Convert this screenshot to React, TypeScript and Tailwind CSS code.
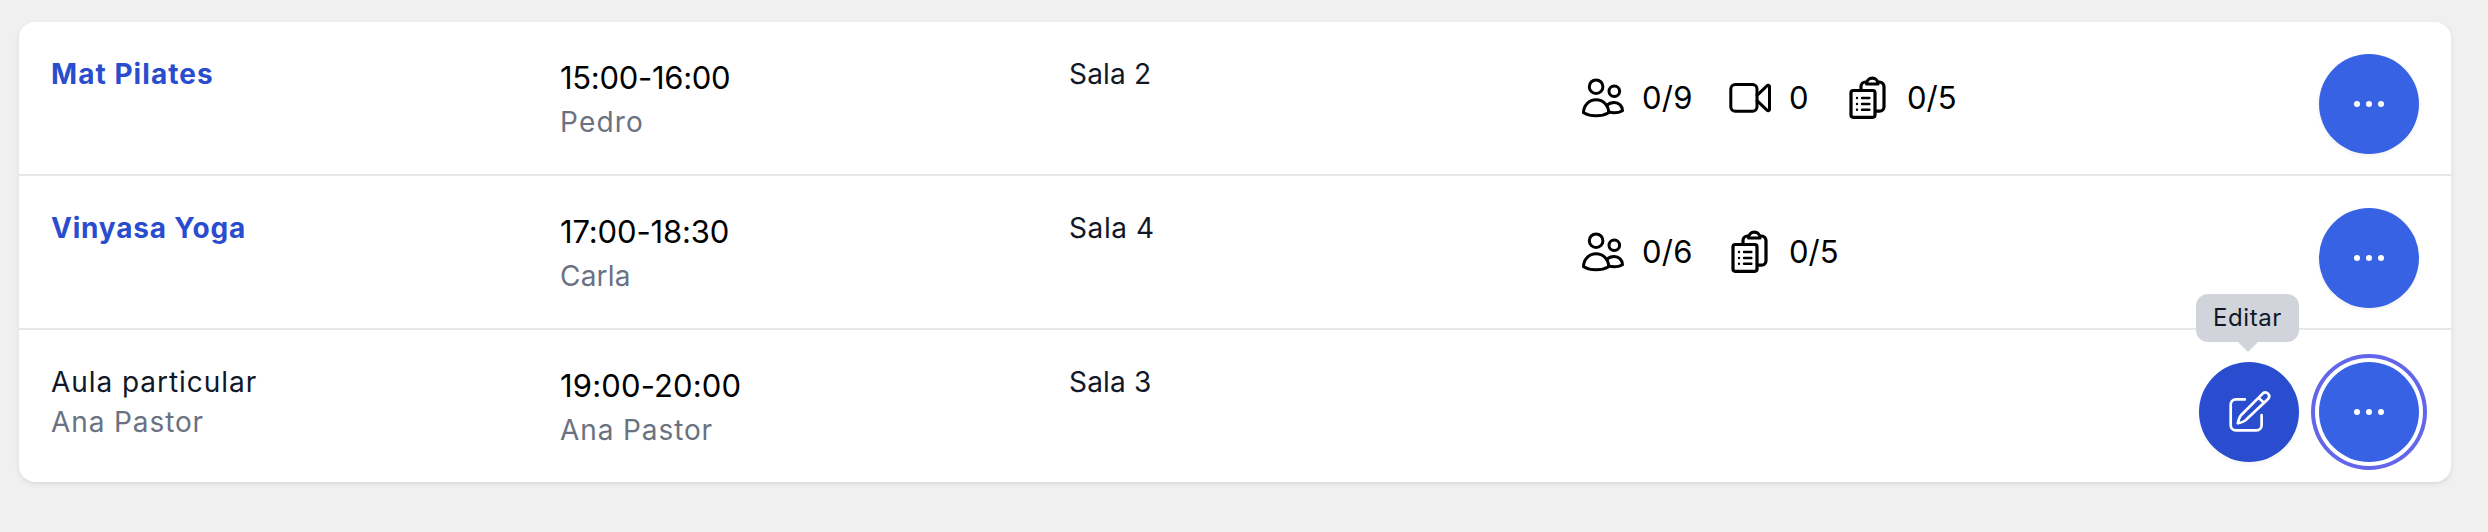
import type { ReactNode } from "react";
import clsx from "clsx";

interface Lesson {
  name: string;
  owner?: string;
  nameClass: string;
  time: string;
  timeClass: string;
  teacher: string;
  teacherClass: string;
  room: string;
  roomClass: string;
  people?: string;
  video?: string;
  list?: string;
  open?: boolean;
}

const lessons: Lesson[] = [
  {
    name: "Mat Pilates",
    nameClass: "font-bold text-[#294dce] tracking-[1.05px]",
    time: "15:00-16:00",
    timeClass: "tracking-[-0.3px]",
    teacher: "Pedro",
    teacherClass: "tracking-[1.2px]",
    room: "Sala 2",
    roomClass: "tracking-[0.2px]",
    people: "0/9",
    video: "0",
    list: "0/5",
  },
  {
    name: "Vinyasa Yoga",
    nameClass: "font-bold text-[#294dce] tracking-[0.8px]",
    time: "17:00-18:30",
    timeClass: "tracking-[-0.15px]",
    teacher: "Carla",
    teacherClass: "tracking-[0.2px]",
    room: "Sala 4",
    roomClass: "tracking-[0.6px]",
    people: "0/6",
    list: "0/5",
  },
  {
    name: "Aula particular",
    owner: "Ana Pastor",
    nameClass: "text-gray-900 tracking-[0.95px]",
    time: "19:00-20:00",
    timeClass: "tracking-[0.15px]",
    teacher: "Ana Pastor",
    teacherClass: "tracking-[0.9px]",
    room: "Sala 3",
    roomClass: "tracking-[0.2px]",
    open: true,
  },
];

const PeopleIcon = () => (
  <svg className="size-12 shrink-0" viewBox="0 0 48 48" fill="none" stroke="currentColor" strokeWidth="3" strokeLinejoin="round" strokeLinecap="round">
    <circle cx="18.100" cy="12.700" r="6.800" />
    <circle cx="36.300" cy="17.300" r="5.300" />
    <path d="M5.500 38.700c0-7.200 5.600-12.900 12.600-12.900s12.600 5.700 12.600 12.900c-3.700 2.100-8 3.100-12.600 3.100s-8.900-1-12.600-3.100z" />
    <path d="M28.700 31.500c1.900-1.900 4.700-3 7.500-3 4.700 0 8.300 3.500 8.300 8.200-2.500 1.400-5.300 2.100-8.300 2.100-1.900 0-3.700-.3-5.500-.9" />
  </svg>
);

const VideoIcon = () => (
  <svg className="size-12 shrink-0" viewBox="0 0 48 48" fill="none" stroke="currentColor" strokeWidth="3" strokeLinejoin="round" strokeLinecap="round">
    <rect x="5.800" y="10.500" width="26.200" height="26.800" rx="4.500" />
    <path d="M32 21.300 42.200 11.600c.9-.8 2.300-.2 2.300 1v22.800c0 1.200-1.400 1.800-2.300 1L32 26.700" />
  </svg>
);

const ListIcon = () => (
  <svg className="size-12 shrink-0" viewBox="0 0 48 48" fill="none" stroke="currentColor" strokeWidth="3.200" strokeLinejoin="round" strokeLinecap="round">
    <rect x="8" y="16.500" width="24" height="26.800" rx="2.200" />
    <path d="M18 16v-3.500a4.500 4.500 0 0 1 4.500-4.500M36 8h.5a4.500 4.500 0 0 1 4.500 4.500v20.300a4.400 4.400 0 0 1-4.400 4.400H33" />
    <path d="M23.600 10c0-3.300 2.500-5.800 5.700-5.800S35 6.700 35 10z" />
    <path strokeWidth="2.400" d="M14 24h.01M19 24h7.400M14 30h.01M19 30h7.400M14 35.800h.01M19 35.800h7.400" />
  </svg>
);

const EditIcon = () => (
  <svg className="size-12 shrink-0" viewBox="0 0 48 48" fill="none" stroke="currentColor" strokeWidth="2.700" strokeLinejoin="round" strokeLinecap="round">
    <path d="M19.800 11.400H10.700a5 5 0 0 0-5 5v20.900a5 5 0 0 0 5 5h20.900a5 5 0 0 0 5-5V27" />
    <path d="M37.900 5.400 16.500 26.800c-2 2-2.900 4.800-3.700 8.500 3.700-.8 6.500-1.700 8.500-3.700L43.300 10.700a3.800 3.800 0 0 0-5.400-5.300zM33.600 9.700l5.500 5.300" />
  </svg>
);

const Count = ({ icon, value, width }: { icon: ReactNode; value: string; width: string }) => (
  <div className="flex items-center gap-4">
    {icon}
    <span className={clsx("text-[31px] leading-[48px] whitespace-nowrap", width)}>{value}</span>
  </div>
);

const Dots = () => (
  <>
    <span className="size-1.5 rounded-full bg-white" />
    <span className="size-1.5 rounded-full bg-white" />
    <span className="size-1.5 rounded-full bg-white" />
  </>
);

const Row = ({ lesson }: { lesson: Lesson }) => (
  <li className="box-content flex h-[120px] px-8 pt-8">
    <div className="w-[509px] shrink-0 text-[28px] leading-10">
      <p className={lesson.nameClass}>{lesson.name}</p>
      {lesson.owner && <p className="tracking-[0.9px] text-gray-500">{lesson.owner}</p>}
    </div>
    <div className="w-[509px] shrink-0">
      <p className={clsx("text-[31px] leading-[48px]", lesson.timeClass)}>{lesson.time}</p>
      <p className={clsx("text-[28px] leading-10 text-gray-500", lesson.teacherClass)}>{lesson.teacher}</p>
    </div>
    <p className={clsx("w-[509px] shrink-0 text-[28px] leading-10 text-gray-900", lesson.roomClass)}>{lesson.room}</p>
    <div className="flex h-[88px] grow items-center gap-8">
      {lesson.people && <Count icon={<PeopleIcon />} value={lesson.people} width="w-[51px] tracking-[0.3px]" />}
      {lesson.video && <Count icon={<VideoIcon />} value={lesson.video} width="w-[22px]" />}
      {lesson.list && <Count icon={<ListIcon />} value={lesson.list} width="w-[51px]" />}
    </div>
    <div className="flex gap-5">
      {lesson.open && (
        <div className="relative">
          <button className="flex size-[100px] items-center justify-center rounded-full bg-[#294dce] text-white shadow-[0_2px_4px_rgba(0,0,0,0.05)]">
            <EditIcon />
          </button>
          <div className="absolute -top-[68px] right-0 flex h-12 w-[103px] items-center justify-center rounded-xl bg-[#d1d5db] text-2xl tracking-[0.6px] text-gray-900">
            Editar
            <span className="absolute top-12 left-[42px] size-0 border-x-[10px] border-t-[10px] border-x-transparent border-t-[#d1d5db]" />
          </div>
        </div>
      )}
      <button
        className={clsx(
          "flex size-[100px] items-center justify-center gap-1.5 rounded-full bg-[#3762e3]",
          lesson.open
            ? "shadow-[0_0_0_4px_#fff,0_0_0_8px_#6366e8]"
            : "shadow-[0_2px_4px_rgba(0,0,0,0.05)]"
        )}
      >
        <Dots />
      </button>
    </div>
  </li>
);

export default function App() {
  return (
    <main className="h-[532px] bg-[#f0f0f0] pt-[22px] pl-[19px] font-[Inter,sans-serif]">
      <ul className="w-[2432px] divide-y-2 divide-gray-200 rounded-2xl bg-white text-black shadow-[0_2px_6px_rgba(0,0,0,0.07),0_2px_4px_-2px_rgba(0,0,0,0.07)]">
        {lessons.map((lesson) => (
          <Row key={lesson.name} lesson={lesson} />
        ))}
      </ul>
    </main>
  );
}
